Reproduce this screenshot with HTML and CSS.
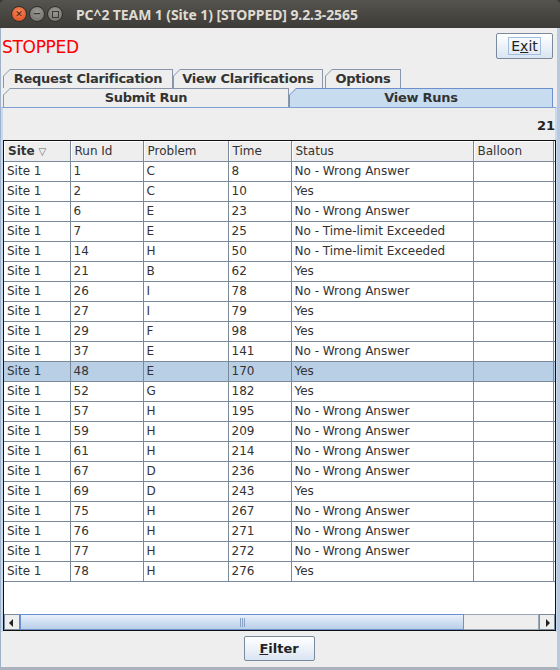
FILE: index.html
```html
<!DOCTYPE html>
<html lang="en">
<head>
    <meta charset="UTF-8">
    <title>PC^2 TEAM 1 (Site 1) [STOPPED] 9.2.3-2565</title>
    <link rel="stylesheet" href="styles.css">
</head>
<body>
<div class="window">
    <div class="titlebar">
        <span class="wbtn close">&#x2715;</span>
        <span class="wbtn">&#x2212;</span>
        <span class="wbtn"><span class="sq"></span></span>
        <span class="title">PC^2 TEAM 1 (Site 1) [STOPPED] 9.2.3-2565</span>
    </div>

    <div class="frame">
        <div class="topbar">
            <span class="state">STOPPED</span>
            <button class="btn exit"><span class="focus">E<u>x</u>it</span></button>
        </div>

        <div class="tabs">
            <div class="tabrow">
                <div class="tab w-req"><span class="lbl">Request Clarification</span></div>
                <div class="tab w-viewclar"><span class="lbl">View Clarifications</span></div>
                <div class="tab w-opt"><span class="lbl">Options</span></div>
            </div>
            <div class="tabrow">
                <div class="tab w-submit"><span class="lbl">Submit Run</span></div>
                <div class="tab w-runs selected"><span class="lbl">View Runs</span></div>
            </div>
        </div>

        <div class="panel">
            <div class="count">21</div>
            <div class="grid">
                <div class="viewport">
                    <table class="runs">
                        <colgroup>
                            <col class="c-site"><col class="c-id"><col class="c-prob"><col class="c-time"><col class="c-status"><col class="c-balloon"><col class="c-more">
                        </colgroup>
                        <thead>
                            <tr>
                                <th><b>Site</b> <span class="sort">&#x25BD;</span></th>
                                <th>Run Id</th>
                                <th>Problem</th>
                                <th>Time</th>
                                <th>Status</th>
                                <th>Balloon</th>
                                <th></th>
                            </tr>
                        </thead>
                        <tbody id="rows"></tbody>
                    </table>
                </div>
                <div class="hscroll">
                    <span class="arrow left"></span>
                    <span class="thumb"><span class="grip"></span></span>
                    <span class="track"></span>
                    <span class="arrow right"></span>
                </div>
            </div>
        </div>

        <div class="bottombar">
            <button class="btn filter"><u>F</u>ilter</button>
        </div>
    </div>
</div>

<script>
    const runs = [
        [1, 'C', 8, 'No - Wrong Answer'],
        [2, 'C', 10, 'Yes'],
        [6, 'E', 23, 'No - Wrong Answer'],
        [7, 'E', 25, 'No - Time-limit Exceeded'],
        [14, 'H', 50, 'No - Time-limit Exceeded'],
        [21, 'B', 62, 'Yes'],
        [26, 'I', 78, 'No - Wrong Answer'],
        [27, 'I', 79, 'Yes'],
        [29, 'F', 98, 'Yes'],
        [37, 'E', 141, 'No - Wrong Answer'],
        [48, 'E', 170, 'Yes'],
        [52, 'G', 182, 'Yes'],
        [57, 'H', 195, 'No - Wrong Answer'],
        [59, 'H', 209, 'No - Wrong Answer'],
        [61, 'H', 214, 'No - Wrong Answer'],
        [67, 'D', 236, 'No - Wrong Answer'],
        [69, 'D', 243, 'Yes'],
        [75, 'H', 267, 'No - Wrong Answer'],
        [76, 'H', 271, 'No - Wrong Answer'],
        [77, 'H', 272, 'No - Wrong Answer'],
        [78, 'H', 276, 'Yes']
    ];

    const tbody = document.getElementById('rows');
    runs.forEach(r => {
        const tr = document.createElement('tr');
        if (r[0] === 48) tr.className = 'sel';
        tr.innerHTML = `<td>Site 1</td><td>${r[0]}</td><td>${r[1]}</td><td>${r[2]}</td><td>${r[3]}</td><td></td><td></td>`;
        tbody.appendChild(tr);
    });
</script>
</body>
</html>
```

FILE: styles.css
```css
* { box-sizing: border-box; }
html, body { margin: 0; padding: 0; }
body { width: 560px; height: 670px; overflow: hidden; background: #3c3b37; font-family: "DejaVu Sans", sans-serif; }

.window { width: 560px; height: 670px; display: flex; flex-direction: column; }

/* title bar (ubuntu) */
.titlebar { height: 28px; flex: none; display: flex; align-items: center; padding-left: 11px; background: linear-gradient(#55544f, #3c3b37); border-radius: 5px 5px 0 0; }
.wbtn { width: 16px; height: 16px; margin-right: 2px; border-radius: 50%; background: radial-gradient(circle at 50% 35%, #9b9a95, #6c6b66); border: 1px solid #2f2e2b; color: #3a3935; font-size: 10px; font-weight: bold; display: flex; align-items: center; justify-content: center; line-height: 1; }
.wbtn.close { background: radial-gradient(circle at 50% 35%, #f58a5c, #d9461a); color: #4a1a08; font-size: 9px; }
.wbtn .sq { width: 7px; height: 7px; border: 1px solid #3a3935; }
.title { margin-left: 11px; color: #dfdbd2; font-family: "Noto Sans", sans-serif; font-weight: 700; font-size: 14px; letter-spacing: -0.1px; }

/* frame body */
.frame { flex: 1; display: flex; flex-direction: column; background: #eeeeee; border-left: 1px solid #9fb2c8; border-right: 3px solid #b8c9dd; border-bottom: 3px solid #aab3bd; }

.topbar { height: 41px; flex: none; display: flex; justify-content: space-between; align-items: flex-start; }
.state { margin: 9px 0 0 1px; color: #ff0000; font-size: 17px; font-family: "DejaVu Sans", sans-serif; letter-spacing: -0.3px; }

.btn { font-family: "DejaVu Sans", sans-serif; font-size: 13px; color: #222; border: 1px solid #7a8a9c; border-radius: 2px; background: linear-gradient(#ffffff 0%, #f1f5fa 40%, #d9e5f2 100%); padding: 0; cursor: pointer; }
.exit { margin: 5px 4px 0 0; width: 57px; height: 26px; font-size: 14px; }
.exit .focus { padding: 0 2px; border: 1px solid #a3bde0; }
.filter { width: 71px; height: 25px; font-weight: bold; }

/* tabs (metal look) */
.tabs { flex: none; padding-left: 2px; }
.tabrow { display: flex; height: 19px; }
.tab { height: 19px; padding: 1px 1px 0 1px; background: #8796ab; clip-path: polygon(0 7px, 7px 0, 100% 0, 100% 100%, 0 100%); }
.tab .lbl { display: block; height: 18px; background: #eeeeee; clip-path: polygon(0 6px, 6px 0, 100% 0, 100% 100%, 0 100%); font-size: 13px; font-weight: bold; color: #333; text-align: center; line-height: 18px; letter-spacing: -0.25px; }
.tab.selected { background: #6d8fcf; }
.tab.selected .lbl { background: #c8dcf0; }
.w-req { width: 170px; }
.w-viewclar { width: 150px; }
.w-opt { width: 76px; margin-left: 2px; }
.w-submit { width: 286px; }
.w-runs { width: 264px; }

/* panel */
.panel { height: 525px; flex: none; border-top: 1px solid #7f9fd4; border-left: 2px solid #c8daf0; border-right: 2px solid #c8daf0; display: flex; flex-direction: column; }
.count { height: 32px; text-align: right; font-weight: bold; font-size: 13px; color: #222; padding: 10px 0 0 0; }

.grid { width: 553px; height: 491px; border: 1px solid #111; background: #fff; display: flex; flex-direction: column; }
.viewport { flex: 1; overflow: hidden; }

.runs { border-collapse: collapse; table-layout: fixed; width: 700px; font-size: 12px; color: #333; }
.c-site { width: 66px; }
.c-id { width: 73px; }
.c-prob { width: 85px; }
.c-time { width: 63px; }
.c-status { width: 182px; }
.c-balloon { width: 80px; }
.c-more { width: 151px; }

.runs th { height: 20px; padding: 0 0 0 4px; background: #eeeeee; font-weight: normal; text-align: left; color: #333; border-right: 1px solid #7a8a9b; border-bottom: 1px solid #7a8a9b; box-shadow: inset 1px 1px 0 #ffffff; white-space: nowrap; }
.runs th .sort { font-size: 10px; color: #666; }
.runs td { height: 20px; padding: 0 0 0 3px; border-right: 1px solid #7a8a9b; border-bottom: 1px solid #7a8a9b; white-space: nowrap; overflow: hidden; }
.runs tr.sel td { background: #b8cfe5; }

/* horizontal scrollbar */
.hscroll { height: 17px; flex: none; display: flex; background: #eeeeee; border-top: 1px solid #fff; }
.arrow { width: 16px; border: 1px solid #7a8a9b; background: #eeeeee; position: relative; }
.arrow::after { content: ""; position: absolute; top: 4px; border-top: 4px solid transparent; border-bottom: 4px solid transparent; }
.arrow.left::after { left: 4px; border-right: 4px solid #222; }
.arrow.right::after { left: 6px; border-left: 4px solid #222; }
.thumb { width: 444px; border: 1px solid #6d8fcf; background: linear-gradient(#e9f0f9, #cfdff1 50%, #b9cfe8); display: flex; justify-content: center; align-items: center; }
.grip { width: 5px; height: 9px; border-left: 1px solid #8aa3c4; border-right: 1px solid #8aa3c4; position: relative; }
.grip::after { content: ""; position: absolute; left: 1px; top: 0; height: 9px; border-left: 1px solid #8aa3c4; }
.track { flex: 1; border: 1px solid #9aa8b8; border-left: none; background: #eeeeee; }

.bottombar { flex: 1; display: flex; justify-content: center; align-items: flex-start; padding-top: 4px; }
```
